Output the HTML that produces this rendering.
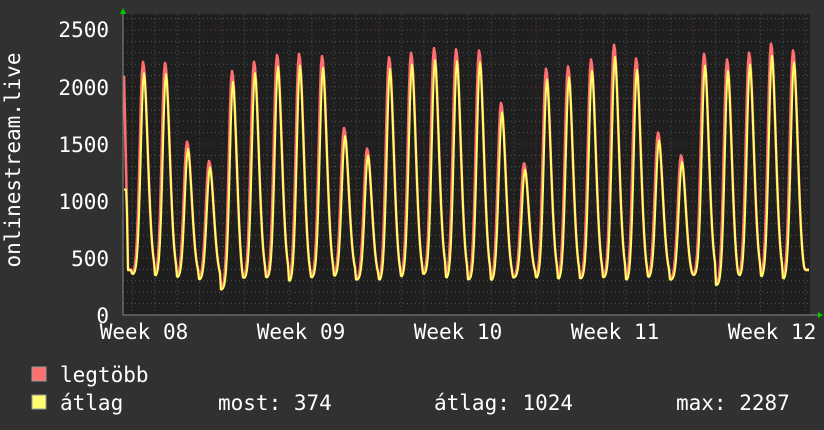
<!DOCTYPE html>
<html><head><meta charset="utf-8"><style>
html,body{margin:0;padding:0;background:#313131;}
svg{display:block}
text{font-family:"DejaVu Sans Mono","Liberation Mono",monospace;fill:#fff;font-size:21px}
</style></head><body>
<svg id="s" width="824" height="430" xmlns="http://www.w3.org/2000/svg">
<rect width="824" height="430" fill="#313131"/>
<rect x="123" y="14" width="687" height="301" fill="#1f1f1f"/>
<g id="grid"></g>
<path id="mx" fill="none" stroke="#ff6f6f" stroke-width="2.6" stroke-linejoin="round"/>
<path id="av" fill="none" stroke="#ffff66" stroke-width="2" stroke-linejoin="round"/>
<line x1="123" y1="315" x2="818" y2="315" stroke="#888" stroke-width="1"/>
<line x1="123" y1="315" x2="123" y2="10" stroke="#888" stroke-width="1"/>
<polygon points="120,14 126,14 123,8" fill="#00cc00"/>
<polygon points="818,312 818,318 823,315" fill="#00cc00"/>
<g text-anchor="end">
<text x="109" y="37">2500</text><text x="109" y="95">2000</text><text x="109" y="152">1500</text>
<text x="109" y="209">1000</text><text x="109" y="266">500</text><text x="109" y="323">0</text>
</g>
<g text-anchor="middle" font-size="22">
<text x="144" y="339">Week 08</text><text x="301" y="339">Week 09</text><text x="458" y="339">Week 10</text>
<text x="615" y="339">Week 11</text><text x="772" y="339">Week 12</text>
</g>
<text transform="translate(20,160) rotate(-90)" text-anchor="middle">onlinestream.live</text>
<rect x="32" y="367" width="14" height="14" fill="#ff7070" stroke="#999" stroke-width="1"/>
<rect x="32" y="395" width="14" height="14" fill="#ffff70" stroke="#999" stroke-width="1"/>
<text x="60" y="382">legtöbb</text>
<text x="60" y="410">átlag</text>
<text x="218" y="410">most: 374</text>
<text x="434" y="410">átlag: 1024</text>
<text x="676" y="410">max: 2287</text>
</svg>
<script>
var g=document.getElementById('grid'),h='';
function Y(v){return 315-v*0.114;}
for(var v=100;v<=2600;v+=100){var y=Y(v);if(y<14)break;var r=v%500==0;
h+='<line x1="123" x2="810" y1="'+y+'" y2="'+y+'" stroke="'+(r?'#6a3a3a':'#555')+'" stroke-dasharray="1,3"/>';}
for(var x=132.4;x<810;x+=22.43){var r=Math.abs(((x-222)/157)-Math.round((x-222)/157))<0.02;
h+='<line y1="14" y2="315" x1="'+x+'" x2="'+x+'" stroke="'+(r?'#6a3a3a':'#555')+'" stroke-dasharray="1,3"/>';}
g.innerHTML=h;
var peaks=[[143,2220],[165,2210],[187,1520],[209,1350],[232,2140],[254,2220],[277,2280],[299,2290],[322,2270],[344,1640],[367,1460],[389,2260],[411,2300],[434,2340],[456,2330],[479,2320],[501,1860],[524,1330],[546,2160],[568,2180],[591,2240],[614,2370],[636,2250],[658,1600],[681,1400],[704,2290],[727,2240],[749,2300],[771,2380],[793,2320]];
var troughs=[360,340,330,310,220,320,330,290,330,340,310,300,330,360,320,310,300,330,320,310,320,330,300,330,310,350,260,340,330,310];
function val(x){
 for(var i=0;i<peaks.length;i++){var p=peaks[i],t=troughs[i];var d=x-p[0];
  if(d>=-11&&d<11.2){var u;
   if(d<0){u=Math.exp(-Math.pow(d/4.5,2));}else{u=Math.exp(-Math.pow(d/6.5,2));}
   return t+(p[1]-t)*u;}}
 return 400;}
var m='',a='';
for(var x=124;x<=809;x+=1){var v=val(x),w=val(x-1)*0.95+12;
 if(x<128)v=2100-(x-124)*400,w=1100;
 m+=(x==124?'M':'L')+x+','+Y(v).toFixed(1);a+=(x==124?'M':'L')+x+','+Y(Math.min(w,v)).toFixed(1);}
document.getElementById('mx').setAttribute('d',m);
document.getElementById('av').setAttribute('d',a);
</script>
</body></html>
